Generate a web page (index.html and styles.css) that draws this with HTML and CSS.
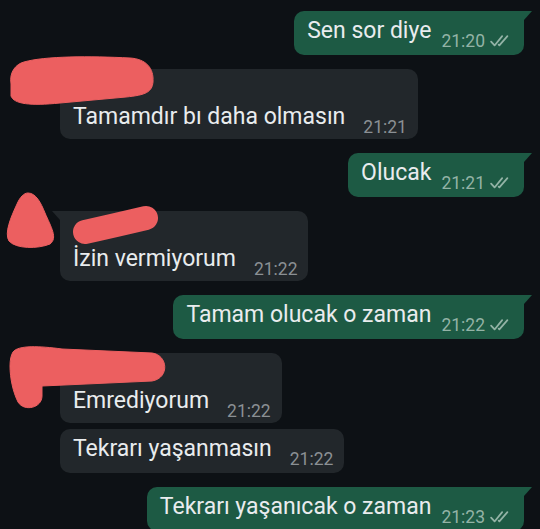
FILE: index.html
```html
<!DOCTYPE html>
<html lang="tr">
<head>
    <meta charset="UTF-8">
    <meta name="viewport" content="width=device-width, initial-scale=1.0">
    <title>Sohbet</title>
    <link rel="stylesheet" href="styles.css">
</head>
<body>

    <section id="chat">
        <div class="row out">
            <div class="bubble tail">
                <div class="line">
                    <span class="text">Sen sor diye</span>
                    <span class="meta">21:20 <svg class="ticks" viewBox="0 0 20 12"><path d="M1.5 6.5 L4.5 9.8 L11 1.8 M8 9.2 L8.6 9.8 L15.5 1.8"/></svg></span>
                </div>
            </div>
        </div>

        <div class="row in">
            <div class="bubble tail named">
                <div class="sender"></div>
                <div class="line">
                    <span class="text">Tamamdır bı daha olmasın</span>
                    <span class="meta">21:21</span>
                </div>
            </div>
        </div>

        <div class="row out">
            <div class="bubble tail">
                <div class="line">
                    <span class="text">Olucak</span>
                    <span class="meta">21:21 <svg class="ticks" viewBox="0 0 20 12"><path d="M1.5 6.5 L4.5 9.8 L11 1.8 M8 9.2 L8.6 9.8 L15.5 1.8"/></svg></span>
                </div>
            </div>
        </div>

        <div class="row in">
            <div class="bubble tail named">
                <div class="sender"></div>
                <div class="line">
                    <span class="text">İzin vermiyorum</span>
                    <span class="meta">21:22</span>
                </div>
            </div>
        </div>

        <div class="row out">
            <div class="bubble tail">
                <div class="line">
                    <span class="text">Tamam olucak o zaman</span>
                    <span class="meta">21:22 <svg class="ticks" viewBox="0 0 20 12"><path d="M1.5 6.5 L4.5 9.8 L11 1.8 M8 9.2 L8.6 9.8 L15.5 1.8"/></svg></span>
                </div>
            </div>
        </div>

        <div class="group">
            <div class="row in">
                <div class="bubble tail named">
                    <div class="sender"></div>
                    <div class="line">
                        <span class="text">Emrediyorum</span>
                        <span class="meta">21:22</span>
                    </div>
                </div>
            </div>
            <div class="row in">
                <div class="bubble">
                    <div class="line">
                        <span class="text">Tekrarı yaşanmasın</span>
                        <span class="meta">21:22</span>
                    </div>
                </div>
            </div>
        </div>

        <div class="row out">
            <div class="bubble tail">
                <div class="line">
                    <span class="text">Tekrarı yaşanıcak o zaman</span>
                    <span class="meta">21:23 <svg class="ticks" viewBox="0 0 20 12"><path d="M1.5 6.5 L4.5 9.8 L11 1.8 M8 9.2 L8.6 9.8 L15.5 1.8"/></svg></span>
                </div>
            </div>
        </div>
    </section>

    <!-- red scribbles hiding names and avatars -->
    <svg class="scribbles" viewBox="0 0 540 529" width="540" height="529">
        <path d="M11 84 C9 72 16 64 24 62 C45 56 90 56 130 58 C146 59 154 68 153 82 C152 92 146 95 126 97 L60 103 C30 106 14 104 11 96 Z"/>
        <path d="M28 193 C36 193 41 203 45 213 C51 227 58 238 50 244 C38 249 16 249 9 241 C4 233 11 217 17 204 C20 197 24 193 28 193 Z"/>
        <path d="M85 232 Q112 226 146 218" fill="none" stroke-width="24" stroke-linecap="round"/>
        <path d="M13 352 C18 345 40 346 62 349 L152 353 C168 355 170 378 152 381 L42 386 L42 396 C42 408 24 412 18 402 C13 392 10 378 10 366 C10 360 11 355 13 352 Z"/>
    </svg>

</body>
</html>
```

FILE: styles.css
```css
/* Dark chat screen */
html, body {
    height: 529px;
    overflow: hidden;
}

body {
    font-family: Roboto, 'Noto Sans', sans-serif;
    background-color: #0d1115;
    color: #e9ecee;
    margin: 0;
    padding: 0;
    position: relative;
}

#chat {
    display: flex;
    flex-direction: column;
    gap: 14px;
    padding-top: 11px;
}

.group {
    display: flex;
    flex-direction: column;
    gap: 6px;
}

.row {
    display: flex;
}

.row.out {
    justify-content: flex-end;
    padding-right: 16px;
}

.row.in {
    padding-left: 60px;
}

/* Bubbles */
.bubble {
    position: relative;
    display: flex;
    flex-direction: column;
    padding: 6px 11px 4px 13px;
    border-radius: 10px;
}

.bubble.named {
    padding-bottom: 2px;
}

.bubble .line {
    display: flex;
    align-items: flex-start;
}

.row.out .bubble {
    background-color: #1d5a44;
}

.row.in .bubble {
    background-color: #22272b;
}

.row.out .bubble.tail {
    border-top-right-radius: 0;
}

.row.in .bubble.tail {
    border-top-left-radius: 0;
}

.row.out .bubble.tail::after {
    content: '';
    position: absolute;
    top: 0;
    right: -8px;
    border-top: 9px solid #1d5a44;
    border-right: 8px solid transparent;
}

.row.in .bubble.tail::before {
    content: '';
    position: absolute;
    top: 0;
    left: -8px;
    border-top: 9px solid #22272b;
    border-left: 8px solid transparent;
}

.sender {
    height: 28px;
}

.text {
    font-size: 23px;
    line-height: 28px;
    white-space: nowrap;
}

.meta {
    display: flex;
    align-items: center;
    gap: 4px;
    font-size: 17.5px;
    line-height: 20px;
    margin-top: 14px;
    white-space: nowrap;
}

.row.out .meta {
    color: #93b3a6;
    margin-left: 10px;
}

.row.in .meta {
    color: #8b9094;
    margin-left: 18px;
}

.ticks {
    width: 24px;
    height: 14px;
    fill: none;
    stroke: currentColor;
    stroke-width: 1.5;
    stroke-linecap: round;
    stroke-linejoin: round;
}

/* Red marker over names */
.scribbles {
    position: absolute;
    top: 0;
    left: 0;
    fill: #ec5f60;
    stroke: #ec5f60;
    pointer-events: none;
}
```
